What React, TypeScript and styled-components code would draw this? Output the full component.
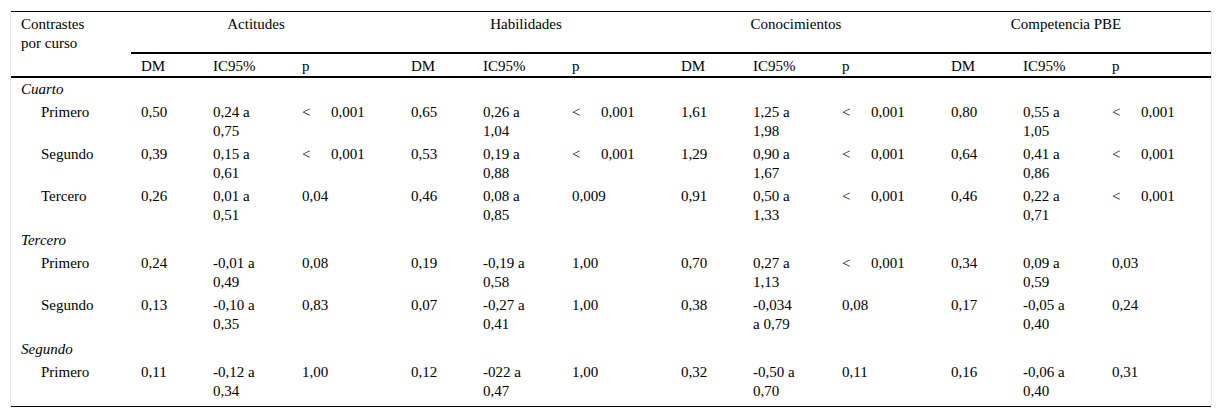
import React from "react";
import styled, { createGlobalStyle } from "styled-components";

const Global = createGlobalStyle`
  html, body { margin: 0; padding: 0; background: #fff; }
  body { font-family: "Liberation Serif", "Times New Roman", serif; color: #000; }
`;

const Page = styled.div`
  padding: 11px 0 0 10px;
`;

const Frame = styled.div`
  width: 1200px;
  border-left: 1px solid #e6e6e6;
  border-right: 1px solid #e6e6e6;
`;

const Table = styled.table`
  width: 1200px;
  table-layout: fixed;
  border-collapse: separate;
  border-spacing: 0;
  border-top: 1px solid #000;
  border-bottom: 1px solid #000;
  font-family: "Liberation Serif", "Times New Roman", serif;
  font-size: 15px;
  line-height: 19px;
  color: #000;

  th, td {
    font-family: "Liberation Serif", "Times New Roman", serif;
    font-size: 15px;
    line-height: 19px;
    color: #000;
  }

  tbody tr:last-child td {
    height: 43px;
  }
`;

const HeadCell = styled.th<{ $rule?: boolean; $center?: boolean }>`
  font-weight: normal;
  text-align: ${(p) => (p.$center ? "center" : "left")};
  vertical-align: top;
  box-sizing: border-box;
  height: 42px;
  padding: ${(p) => (p.$center ? "3px 30px 0 10px" : "3px 0 0 10px")};
  border-bottom: ${(p) => (p.$rule ? "2px solid #000" : "none")};
`;

const SubHead = styled.th`
  font-weight: normal;
  text-align: left;
  vertical-align: top;
  height: 22px;
  box-sizing: border-box;
  padding: 3px 0 0 10px;
  border-bottom: 2px solid #000;
`;

const GroupCell = styled.td`
  font-style: italic;
  height: 25px;
  box-sizing: border-box;
  padding: 2px 0 0 10px;
  vertical-align: top;
`;

const Cell = styled.td<{ $indent?: boolean }>`
  height: 42px;
  box-sizing: border-box;
  padding: 0 8px 0 ${(p) => (p.$indent ? "30px" : "10px")};
  vertical-align: top;
  white-space: nowrap;
`;

const Line = styled.span`
  display: block;
`;

const Lt = styled.span`
  display: inline-block;
  width: 29px;
`;

type Stat = [string, [string, string], string];
type Row = { label: string; stats: Stat[] };
type Group = { title: string; rows: Row[] };

const groups: Group[] = [
  {
    title: "Cuarto",
    rows: [
      {
        label: "Primero",
        stats: [
          ["0,50", ["0,24 a", "0,75"], "<0,001"],
          ["0,65", ["0,26 a", "1,04"], "<0,001"],
          ["1,61", ["1,25 a", "1,98"], "<0,001"],
          ["0,80", ["0,55 a", "1,05"], "<0,001"],
        ],
      },
      {
        label: "Segundo",
        stats: [
          ["0,39", ["0,15 a", "0,61"], "<0,001"],
          ["0,53", ["0,19 a", "0,88"], "<0,001"],
          ["1,29", ["0,90 a", "1,67"], "<0,001"],
          ["0,64", ["0,41 a", "0,86"], "<0,001"],
        ],
      },
      {
        label: "Tercero",
        stats: [
          ["0,26", ["0,01 a", "0,51"], "0,04"],
          ["0,46", ["0,08 a", "0,85"], "0,009"],
          ["0,91", ["0,50 a", "1,33"], "<0,001"],
          ["0,46", ["0,22 a", "0,71"], "<0,001"],
        ],
      },
    ],
  },
  {
    title: "Tercero",
    rows: [
      {
        label: "Primero",
        stats: [
          ["0,24", ["-0,01 a", "0,49"], "0,08"],
          ["0,19", ["-0,19 a", "0,58"], "1,00"],
          ["0,70", ["0,27 a", "1,13"], "<0,001"],
          ["0,34", ["0,09 a", "0,59"], "0,03"],
        ],
      },
      {
        label: "Segundo",
        stats: [
          ["0,13", ["-0,10 a", "0,35"], "0,83"],
          ["0,07", ["-0,27 a", "0,41"], "1,00"],
          ["0,38", ["-0,034", "a 0,79"], "0,08"],
          ["0,17", ["-0,05 a", "0,40"], "0,24"],
        ],
      },
    ],
  },
  {
    title: "Segundo",
    rows: [
      {
        label: "Primero",
        stats: [
          ["0,11", ["-0,12 a", "0,34"], "1,00"],
          ["0,12", ["-022 a", "0,47"], "1,00"],
          ["0,32", ["-0,50 a", "0,70"], "0,11"],
          ["0,16", ["-0,06 a", "0,40"], "0,31"],
        ],
      },
    ],
  },
];

const categories = ["Actitudes", "Habilidades", "Conocimientos", "Competencia PBE"];

const PValue = ({ v }: { v: string }) =>
  v.startsWith("<") ? (
    <>
      <Lt>&lt;</Lt>
      {v.slice(1)}
    </>
  ) : (
    <>{v}</>
  );

export default function App() {
  return (
    <>
      <Global />
      <Page>
        <Frame>
          <Table>
            <colgroup>
              <col style={{ width: 120 }} />
              {categories.map((c) => (
                <React.Fragment key={c}>
                  <col style={{ width: 72 }} />
                  <col style={{ width: 89 }} />
                  <col style={{ width: 109 }} />
                </React.Fragment>
              ))}
            </colgroup>
            <thead>
              <tr>
                <HeadCell rowSpan={2} style={{ borderBottom: "2px solid #000" }}>
                  Contrastes
                  <br />
                  por curso
                </HeadCell>
                {categories.map((c) => (
                  <HeadCell key={c} colSpan={3} $rule $center>
                    {c}
                  </HeadCell>
                ))}
              </tr>
              <tr>
                {categories.map((c) => (
                  <React.Fragment key={c}>
                    <SubHead>DM</SubHead>
                    <SubHead>IC95%</SubHead>
                    <SubHead>p</SubHead>
                  </React.Fragment>
                ))}
              </tr>
            </thead>
            <tbody>
              {groups.map((g) => (
                <React.Fragment key={g.title}>
                  <tr>
                    <GroupCell colSpan={13}>{g.title}</GroupCell>
                  </tr>
                  {g.rows.map((r) => (
                    <tr key={g.title + r.label}>
                      <Cell $indent>{r.label}</Cell>
                      {r.stats.map((s, i) => (
                        <React.Fragment key={i}>
                          <Cell>{s[0]}</Cell>
                          <Cell>
                            <Line>{s[1][0]}</Line>
                            <Line>{s[1][1]}</Line>
                          </Cell>
                          <Cell>
                            <PValue v={s[2]} />
                          </Cell>
                        </React.Fragment>
                      ))}
                    </tr>
                  ))}
                </React.Fragment>
              ))}
            </tbody>
          </Table>
        </Frame>
      </Page>
    </>
  );
}
